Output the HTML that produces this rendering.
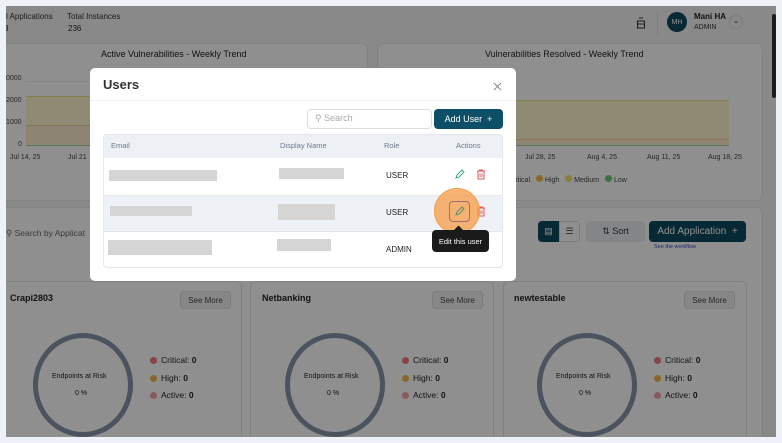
<!DOCTYPE html>
<html><head><meta charset="utf-8"><style>
*{box-sizing:border-box;margin:0;padding:0}
body{width:782px;height:443px;background:#eef2f8;font-family:"Liberation Sans",sans-serif;position:relative;overflow:hidden;color:#222}
.a{position:absolute}
#page{position:absolute;left:6px;top:6px;width:770px;height:431px;background:#f4f5f7;overflow:hidden}
.card{position:absolute;background:#fff;border:1px solid #e2e5ea;border-radius:6px}
.t{position:absolute;white-space:nowrap}
#ov{position:absolute;left:6px;top:6px;width:770px;height:431px;background:rgba(0,0,0,0.44)}
.red{background:#d5d5d5;position:absolute}
.btn{position:absolute;border-radius:4px;font-size:9px;display:flex;align-items:center;justify-content:center}
.dot{display:inline-block;width:7px;height:7px;border-radius:50%;margin-right:4px;vertical-align:-1px}
</style></head><body>
<div id="page">
  <div class="t" style="left:0;top:6px;font-size:8px;color:#333">l Applications</div>
  <div class="t" style="left:61px;top:6px;font-size:8px;color:#333">Total Instances</div>
  <div class="t" style="left:-2px;top:18px;font-size:8px">3</div>
  <div class="t" style="left:62px;top:18px;font-size:8px">236</div>
  <svg class="a" style="left:630px;top:10px" width="10" height="14"><rect x="1.5" y="5" width="7" height="7" fill="none" stroke="#333"/><line x1="3" y1="2" x2="7" y2="2" stroke="#333"/><line x1="2" y1="8" x2="8" y2="8" stroke="#333"/></svg>
  <div class="a" style="left:651px;top:5px;width:1px;height:24px;background:#ddd"></div>
  <div class="a" style="left:661px;top:6px;width:20px;height:20px;border-radius:50%;background:#0d4a60;color:#fff;font-size:7px;display:flex;align-items:center;justify-content:center">MH</div>
  <div class="t" style="left:688px;top:6px;font-size:8px;font-weight:bold">Mani HA</div>
  <div class="t" style="left:688px;top:18px;font-size:7px;color:#333">ADMIN</div>
  <div class="a" style="left:723px;top:9px;width:14px;height:14px;border-radius:50%;border:1px solid #ddd;font-size:7px;text-align:center;line-height:12px">⌄</div>
  <div class="a" style="left:766px;top:8px;width:4px;height:84px;background:#333;border-radius:2px"></div>

  <div class="card" style="left:-4px;top:37px;width:366px;height:158px"></div>
  <div class="t" style="left:95px;top:43px;font-size:9px;color:#222">Active Vulnerabilities - Weekly Trend</div>
  <div class="t" style="left:0;top:69px;font-size:7px;color:#444">0000</div>
  <div class="t" style="left:0;top:91px;font-size:7px;color:#444">2000</div>
  <div class="t" style="left:0;top:113px;font-size:7px;color:#444">1000</div>
  <div class="t" style="left:12px;top:135px;font-size:7px;color:#444">0</div>
  <div class="a" style="left:20px;top:75px;width:340px;height:1px;background:#eee"></div>
  <div class="a" style="left:20px;top:90px;width:340px;height:49px;background:#fdf6cf;border-top:1px solid #efe08a"></div>
  <div class="a" style="left:20px;top:119px;width:340px;height:20px;background:#fdeccf;border-top:1px solid #f2cf8f"></div>
  <div class="a" style="left:20px;top:139px;width:340px;height:1px;background:#9ed3a4"></div>
  <div class="t" style="left:4px;top:148px;font-size:7px;color:#444">Jul 14, 25</div>
  <div class="t" style="left:62px;top:148px;font-size:7px;color:#444">Jul 21</div>

  <div class="card" style="left:371px;top:37px;width:386px;height:158px"></div>
  <div class="t" style="left:479px;top:43px;font-size:9px;color:#222">Vulnerabilities Resolved - Weekly Trend</div>
  <div class="a" style="left:495px;top:94px;width:228px;height:45px;background:#fdf6cf;border-top:1px solid #efe08a"></div>
  <div class="a" style="left:495px;top:133px;width:228px;height:6px;background:#fdeccf;border-top:1px solid #f2cf8f"></div>
  <div class="a" style="left:495px;top:139px;width:228px;height:1px;background:#9ed3a4"></div>
  <div class="t" style="left:519px;top:148px;font-size:7px;color:#444">Jul 28, 25</div>
  <div class="t" style="left:581px;top:148px;font-size:7px;color:#444">Aug 4, 25</div>
  <div class="t" style="left:641px;top:148px;font-size:7px;color:#444">Aug 11, 25</div>
  <div class="t" style="left:702px;top:148px;font-size:7px;color:#444">Aug 18, 25</div>
  <div class="t" style="left:510px;top:169px;font-size:7px;color:#444">itical <span style="display:inline-block;width:7px;height:7px;border-radius:50%;background:#f2b84b;margin-left:4px"></span> High <span style="display:inline-block;width:7px;height:7px;border-radius:50%;background:#f3e36b;margin-left:4px"></span> Medium <span style="display:inline-block;width:7px;height:7px;border-radius:50%;background:#6cc97a;margin-left:4px"></span> Low</div>

  <div class="card" style="left:-4px;top:201px;width:761px;height:240px"></div>
  <div class="t" style="left:0;top:222px;font-size:8.5px;color:#666">⚲ Search by Applicat</div>
  <div class="btn" style="left:532px;top:215px;width:21px;height:21px;background:#0d4a60;color:#fff;border-radius:4px 0 0 4px">▤</div>
  <div class="btn" style="left:553px;top:215px;width:21px;height:21px;background:#fff;border:1px solid #ddd;border-radius:0 4px 4px 0;color:#444">☰</div>
  <div class="btn" style="left:580px;top:215px;width:59px;height:21px;background:#eceef1;color:#333">⇅ Sort</div>
  <div class="btn" style="left:643px;top:215px;width:97px;height:21px;background:#0d4a60;color:#fff;font-size:10px">Add Application&nbsp; +</div>
  <div class="t" style="left:648px;top:238px;font-size:5.5px;color:#3946b8">See the workflow</div>

  <div class="card" style="left:-4px;top:275px;width:240px;height:170px"></div>
  <div class="card" style="left:244px;top:275px;width:244px;height:170px"></div>
  <div class="card" style="left:497px;top:275px;width:244px;height:170px"></div>
</div>
<div class="t" style="left:10px;top:293px;font-size:9px;font-weight:bold">Crapi2803</div>
<div class="t" style="left:262px;top:293px;font-size:9px;font-weight:bold">Netbanking</div>
<div class="t" style="left:514px;top:293px;font-size:9px;font-weight:bold">newtestable</div>
<div class="btn" style="left:180px;top:291px;width:51px;height:18px;background:#f0f1f3;border:1px solid #ddd;color:#444;font-size:8px">See More</div>
<div class="btn" style="left:432px;top:291px;width:51px;height:18px;background:#f0f1f3;border:1px solid #ddd;color:#444;font-size:8px">See More</div>
<div class="btn" style="left:684px;top:291px;width:51px;height:18px;background:#f0f1f3;border:1px solid #ddd;color:#444;font-size:8px">See More</div>
<div class="a" style="left:33px;top:333px;width:100px;height:104px;border-radius:50%;border:5px solid #8494a8"></div>
<div class="a" style="left:285px;top:333px;width:100px;height:104px;border-radius:50%;border:5px solid #8494a8"></div>
<div class="a" style="left:537px;top:333px;width:100px;height:104px;border-radius:50%;border:5px solid #8494a8"></div>
<div class="t" style="left:52px;top:373px;font-size:7px">Endpoints at Risk</div><div class="t" style="left:75px;top:390px;font-size:7px">0 %</div>
<div class="t" style="left:304px;top:373px;font-size:7px">Endpoints at Risk</div><div class="t" style="left:327px;top:390px;font-size:7px">0 %</div>
<div class="t" style="left:556px;top:373px;font-size:7px">Endpoints at Risk</div><div class="t" style="left:579px;top:390px;font-size:7px">0 %</div>
<div class="t" style="left:150px;top:352px;font-size:8.5px;line-height:17.5px"><span class="dot" style="background:#f07a7a"></span>Critical: <b>0</b><br><span class="dot" style="background:#f2b84b"></span>High: <b>0</b><br><span class="dot" style="background:#f3a0a8"></span>Active: <b>0</b></div>
<div class="t" style="left:402px;top:352px;font-size:8.5px;line-height:17.5px"><span class="dot" style="background:#f07a7a"></span>Critical: <b>0</b><br><span class="dot" style="background:#f2b84b"></span>High: <b>0</b><br><span class="dot" style="background:#f3a0a8"></span>Active: <b>0</b></div>
<div class="t" style="left:654px;top:352px;font-size:8.5px;line-height:17.5px"><span class="dot" style="background:#f07a7a"></span>Critical: <b>0</b><br><span class="dot" style="background:#f2b84b"></span>High: <b>0</b><br><span class="dot" style="background:#f3a0a8"></span>Active: <b>0</b></div>

<div id="ov"></div>

<div class="a" style="left:90px;top:68px;width:426px;height:213px;background:#fff;border-radius:5px"></div>
<div class="t" style="left:103px;top:77px;font-size:13px;font-weight:bold;color:#333">Users</div>
<svg class="a" style="left:493px;top:82px" width="9" height="9"><path d="M1 1L8 8M8 1L1 8" stroke="#888" stroke-width="1"/></svg>
<div class="a" style="left:90px;top:100px;width:426px;height:1px;background:#eee"></div>
<div class="a" style="left:307px;top:109px;width:125px;height:20px;border:1px solid #ddd;border-radius:4px"></div>
<div class="t" style="left:315px;top:113px;font-size:9px;color:#aaa">⚲ Search</div>
<div class="btn" style="left:434px;top:109px;width:69px;height:20px;background:#0d4f66;color:#fff;font-size:9px">Add User&nbsp; +</div>
<div class="a" style="left:103px;top:134px;width:400px;height:134px;border:1px solid #e4e7eb;border-radius:4px;overflow:hidden">
  <div class="a" style="left:0;top:0;width:400px;height:23px;background:#edf1f5"></div>
  <div class="a" style="left:0;top:60px;width:400px;height:37px;background:#eef2f6;border-top:1px solid #e3e6ea;border-bottom:1px solid #e3e6ea"></div>
</div>
<div class="t" style="left:111px;top:141px;font-size:7.5px;color:#6b7a8c">Email</div>
<div class="t" style="left:280px;top:141px;font-size:7.5px;color:#6b7a8c">Display Name</div>
<div class="t" style="left:384px;top:141px;font-size:7.5px;color:#6b7a8c">Role</div>
<div class="t" style="left:456px;top:141px;font-size:7.5px;color:#6b7a8c">Actions</div>
<div class="red" style="left:109px;top:170px;width:108px;height:11px"></div>
<div class="red" style="left:279px;top:168px;width:65px;height:11px"></div>
<div class="red" style="left:110px;top:206px;width:82px;height:10px"></div>
<div class="red" style="left:278px;top:204px;width:57px;height:16px"></div>
<div class="red" style="left:108px;top:240px;width:104px;height:15px"></div>
<div class="red" style="left:277px;top:239px;width:54px;height:12px"></div>
<div class="t" style="left:386px;top:171px;font-size:8px">USER</div>
<div class="t" style="left:386px;top:208px;font-size:8px">USER</div>
<div class="t" style="left:386px;top:245px;font-size:8px">ADMIN</div>
<svg class="a" style="left:455px;top:169px" width="10" height="10"><path d="M1 9L2 6L7 1L9 3L4 8Z" fill="none" stroke="#3aa57f"/></svg>
<svg class="a" style="left:476px;top:169px" width="10" height="11"><path d="M1 2H9M3.5 2V1H6.5V2M2 2.5V10H8V2.5M4 4.5V8M6 4.5V8" fill="none" stroke="#e05a5a"/></svg>
<svg class="a" style="left:476px;top:206px" width="10" height="11"><path d="M1 2H9M3.5 2V1H6.5V2M2 2.5V10H8V2.5M4 4.5V8M6 4.5V8" fill="none" stroke="#e05a5a"/></svg>
<div class="a" style="left:434px;top:188px;width:46px;height:46px;border-radius:50%;background:rgba(245,155,70,0.75);border:1px solid #f3a04c"></div>
<div class="a" style="left:449px;top:201px;width:21px;height:21px;border-radius:4px;border:1px solid #a07070"></div>
<svg class="a" style="left:455px;top:206px" width="10" height="10"><path d="M1 9L2 6L7 1L9 3L4 8Z" fill="none" stroke="#5a9070"/></svg>
<div class="a" style="left:455px;top:227px;width:7px;height:7px;background:#1a1a1a;transform:rotate(45deg)"></div>
<div class="btn" style="left:432px;top:230px;width:57px;height:22px;background:#1a1a1a;color:#fff;font-size:7.5px">Edit this user</div>
</body></html>
